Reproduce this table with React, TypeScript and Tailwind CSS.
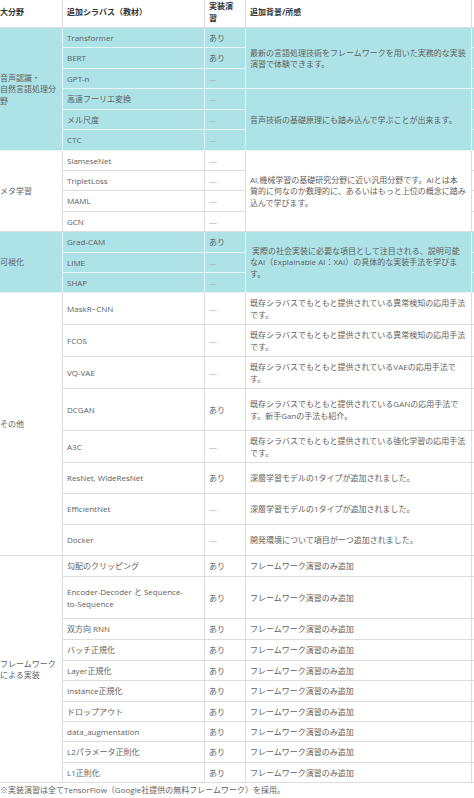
import React from "react"

type Row = { item: React.ReactNode; impl: string; note?: React.ReactNode; noteSpan?: number }

type Group = {
  label: React.ReactNode
  cyan: boolean
  rows: Row[]
}

const frameworkNote = "フレームワーク演習のみ追加"

const groups: Group[] = [
  {
    label: (
      <>
        音声認識・
        <br />
        自然言語処理分野
      </>
    ),
    cyan: true,
    rows: [
      { item: "Transformer", impl: "あり", note: "最新の言語処理技術をフレームワークを用いた実務的な実装演習で体験できます。", noteSpan: 3 },
      { item: "BERT", impl: "あり" },
      { item: "GPT-n", impl: "—" },
      { item: "高速フーリエ変換", impl: "—", note: "音声技術の基礎原理にも踏み込んで学ぶことが出来ます。", noteSpan: 3 },
      { item: "メル尺度", impl: "—" },
      { item: "CTC", impl: "—" },
    ],
  },
  {
    label: "メタ学習",
    cyan: false,
    rows: [
      {
        item: "SiameseNet",
        impl: "—",
        note: (
          <>
            AI,機械学習の基礎研究分野に近い汎用分野です。AIとは本
            <br />
            質的に何なのか数理的に、あるいはもっと上位の概念に踏み込んで学びます。
          </>
        ),
        noteSpan: 4,
      },
      { item: "TripletLoss", impl: "—" },
      { item: "MAML", impl: "—" },
      { item: "GCN", impl: "—" },
    ],
  },
  {
    label: "可視化",
    cyan: true,
    rows: [
      {
        item: "Grad-CAM",
        impl: "あり",
        note: (
          <>
            {"\u00a0"}実際の社会実装に必要な項目として注目される、説明可能
            <br />
            なAI（Explainable AI：XAI）の具体的な実装手法を学びます。
          </>
        ),
        noteSpan: 3,
      },
      { item: "LIME", impl: "—" },
      { item: "SHAP", impl: "—" },
    ],
  },
  {
    label: "その他",
    cyan: false,
    rows: [
      { item: "MaskR−CNN", impl: "—", note: "既存シラバスでもともと提供されている異常検知の応用手法です。", noteSpan: 1 },
      { item: "FCOS", impl: "—", note: "既存シラバスでもともと提供されている異常検知の応用手法です。", noteSpan: 1 },
      { item: "VQ-VAE", impl: "—", note: "既存シラバスでもともと提供されているVAEの応用手法です。", noteSpan: 1 },
      { item: "DCGAN", impl: "あり", note: "既存シラバスでもともと提供されているGANの応用手法です。新手Ganの手法も紹介。", noteSpan: 1 },
      { item: "A3C", impl: "—", note: "既存シラバスでもともと提供されている強化学習の応用手法です。", noteSpan: 1 },
      { item: "ResNet, WideResNet", impl: "あり", note: "深層学習モデルの1タイプが追加されました。", noteSpan: 1 },
      { item: "EfficientNet", impl: "—", note: "深層学習モデルの1タイプが追加されました。", noteSpan: 1 },
      { item: "Docker", impl: "—", note: "開発環境について項目が一つ追加されました。", noteSpan: 1 },
    ],
  },
  {
    label: "フレームワークによる実装",
    cyan: false,
    rows: [
      { item: "勾配のクリッピング", impl: "あり", note: frameworkNote, noteSpan: 1 },
      {
        item: (
          <>
            Encoder-Decoder と Sequence-
            <br />
            to-Sequence
          </>
        ),
        impl: "あり",
        note: frameworkNote,
        noteSpan: 1,
      },
      { item: "双方向 RNN", impl: "あり", note: frameworkNote, noteSpan: 1 },
      { item: "バッチ正規化", impl: "あり", note: frameworkNote, noteSpan: 1 },
      { item: "Layer正規化", impl: "あり", note: frameworkNote, noteSpan: 1 },
      { item: "Instance正規化", impl: "あり", note: frameworkNote, noteSpan: 1 },
      { item: "ドロップアウト", impl: "あり", note: frameworkNote, noteSpan: 1 },
      { item: "data_augmentation", impl: "あり", note: frameworkNote, noteSpan: 1 },
      { item: "L2パラメータ正則化", impl: "あり", note: frameworkNote, noteSpan: 1 },
      { item: "L1正則化", impl: "あり", note: frameworkNote, noteSpan: 1 },
    ],
  },
]

const labelSpan: Record<number, string> = {
  3: "row-span-3",
  4: "row-span-4",
  6: "row-span-6",
  8: "row-span-8",
  10: "row-span-10",
}

const noteSpanClass: Record<number, string> = {
  1: "row-span-1",
  3: "row-span-3",
  4: "row-span-4",
}

function tone(cyan: boolean) {
  return cyan ? "bg-[#ade3e6] border-[#e3f5f6]" : "bg-white border-[#dddddd]"
}

export default function App() {
  return (
    <div className="w-[474px] h-[798px] overflow-hidden bg-white text-[8px] leading-[11.5px] text-[#606060] font-['Open_Sans','Noto_Sans_CJK_JP',sans-serif]">
      <div className="grid w-[492px] grid-cols-[63px_142px_41px_226px_20px] grid-rows-[28px_20px_21px_20px_21px_20px_21px_20px_20px_21px_20px_21px_20px_20px_32px_32px_32px_42px_32px_31px_31px_31px_21px_42px_21px_21px_20px_21px_20px_20px_21px_20px]">
        {/* header */}
        <div className="flex items-center pb-[4px] border-b border-r border-[#dddddd] font-bold text-[#333333]">大分野</div>
        <div className="flex items-center pb-[4px] px-[4px] border-b border-r border-[#dddddd] font-bold text-[#333333]">追加シラバス（教材）</div>
        <div className="flex items-center pb-[4px] px-[4px] border-b border-r border-[#dddddd] font-bold text-[#333333]">
          <span>
            実装演
            <br />習
          </span>
        </div>
        <div className="flex items-center pb-[4px] px-[4px] border-b border-r border-[#dddddd] font-bold text-[#333333]">追加背景/所感</div>
        <div className="border-b border-[#dddddd]" />

        {groups.map((g, gi) =>
          g.rows.map((r, ri) => (
            <React.Fragment key={`${gi}-${ri}`}>
              {ri === 0 && (
                <div className={`${labelSpan[g.rows.length]} flex items-center pr-[4px] border-b border-r ${g.cyan ? "bg-[#ade3e6] border-[#e3f5f6]" : "bg-white border-[#dddddd]"}`}>
                  <span>{g.label}</span>
                </div>
              )}
              <div className={`flex items-center px-[4px] border-b border-r ${tone(g.cyan)}`}>
                <span>{r.item}</span>
              </div>
              <div className={`flex items-center px-[4px] border-b border-r ${tone(g.cyan)} ${r.impl === "—" ? "text-[#aaaaaa]" : ""}`}>{r.impl}</div>
              {r.note !== undefined && (
                <div className={`${noteSpanClass[r.noteSpan ?? 1]} flex items-center pl-[4px] pr-[3px] border-b border-r ${tone(g.cyan)}`}>
                  <span>{r.note}</span>
                </div>
              )}
              <div className={`border-b ${tone(g.cyan)}`} />
            </React.Fragment>
          ))
        )}
      </div>
      <p className="pt-[1px]">※実装演習は全てTensorFlow（Google社提供の無料フレームワーク）を採用。</p>
    </div>
  )
}
